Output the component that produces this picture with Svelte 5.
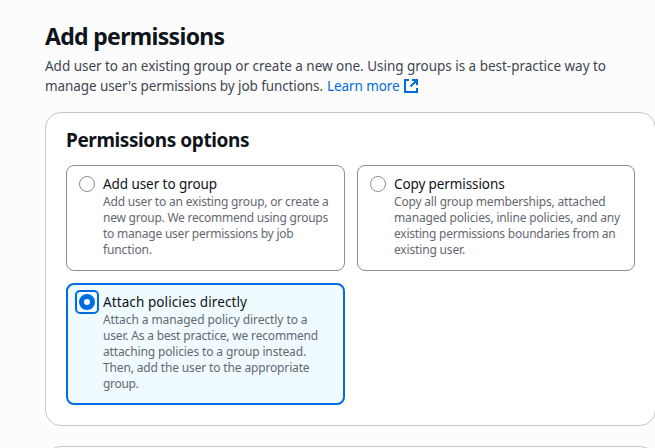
<script>
  let selected = $state('attach');

  const intro = [
    ['Add user to an existing group or create a new one. Using groups is a best-practice way to', 561],
    ["manage user's permissions by job functions.", 278]
  ];

  const options = [
    {
      id: 'group',
      label: ['Add user to group', 114],
      lines: [
        ['Add user to an existing group, or create a', 225.5],
        ['new group. We recommend using groups', 225],
        ['to manage user permissions by job', 190.5],
        ['function.', 49]
      ]
    },
    {
      id: 'copy',
      label: ['Copy permissions', 110.5],
      lines: [
        ['Copy all group memberships, attached', 211.5],
        ['managed policies, inline policies, and any', 226],
        ['existing permissions boundaries from an', 221.5],
        ['existing user.', 71]
      ]
    },
    {
      id: 'attach',
      label: ['Attach policies directly', 144],
      lines: [
        ['Attach a managed policy directly to a', 204.5],
        ['user. As a best practice, we recommend', 215],
        ['attaching policies to a group instead.', 203],
        ['Then, add the user to the appropriate', 206.5],
        ['group.', 35.5]
      ]
    }
  ];

  // Tracks a line of text so that it sets to the given measure.
  function measure(node, width) {
    const natural = node.getBoundingClientRect().width;
    node.style.letterSpacing = `${(width - natural) / node.textContent.length}px`;
  }
</script>

<main>
  <header>
    <h1><span class="line" use:measure={179.5}>Add permissions</span></h1>
    <p>
      <span class="line" use:measure={intro[0][1]}>{intro[0][0]}</span><br />
      <span class="line" use:measure={intro[1][1]}>{intro[1][0]}</span><a href="#learn"><span class="line" use:measure={72.5}>Learn more</span><svg viewBox="0 0 16 16" width="16" height="16" aria-hidden="true">
          <path d="M6 2H2v12h12v-4M9 2h5v5M14 2L7.5 8.5" />
        </svg></a>
    </p>
  </header>

  <section class="panel">
    <h2><span class="line" use:measure={183}>Permissions options</span></h2>
    <div class="tiles">
      {#each options as option}
        <label class="tile" class:selected={selected === option.id}>
          <input type="radio" name="permissions" value={option.id} bind:group={selected} />
          <span class="radio"></span>
          <span class="copy">
            <span class="name"><span class="line" use:measure={option.label[1]}>{option.label[0]}</span></span>
            {#each option.lines as [text, width]}
              <span class="desc"><span class="line" use:measure={width}>{text}</span></span>
            {/each}
          </span>
        </label>
      {/each}
    </div>
  </section>

  <section class="panel next"></section>
</main>

<style>
  :global(body) {
    background: #fcfcfd;
    overflow: hidden;
  }
  main {
    box-sizing: border-box;
    width: 656px;
    height: 448px;
    overflow: hidden;
    padding: 21px 0 0 45px;
    font-family: 'Noto Sans', 'Open Sans', sans-serif;
    color: #0f141a;
  }
  .line {
    display: inline-block;
    white-space: nowrap;
  }
  header {
    height: 91px;
  }
  h1 {
    margin: 0;
    font-size: 23px;
    line-height: 30px;
    font-weight: 700;
  }
  p {
    margin: 5px 0 0;
    font-size: 13.5px;
    line-height: 20px;
    color: #424650;
    white-space: nowrap;
  }
  a {
    margin-left: 4px;
    color: #006ce0;
    text-decoration: none;
  }
  a svg {
    margin-left: 3px;
    vertical-align: -3px;
    fill: none;
    stroke: #006ce0;
    stroke-width: 2;
  }
  .panel {
    box-sizing: border-box;
    width: 611px;
    height: 314px;
    padding: 15px 20px 0;
    border: 1px solid #c6c6cd;
    border-radius: 16px;
    background: #fff;
  }
  .next {
    margin-top: 20px;
  }
  h2 {
    margin: 0;
    font-size: 19px;
    line-height: 24px;
    font-weight: 700;
  }
  .tiles {
    display: grid;
    grid-template-columns: 279px 278px;
    gap: 12px;
    margin-top: 13px;
  }
  .tile {
    box-sizing: border-box;
    display: flex;
    align-items: flex-start;
    gap: 8px;
    padding: 9px 12px 12px;
    border: 1px solid #8c8c94;
    border-radius: 8px;
    cursor: pointer;
  }
  .tile.selected {
    padding: 8px 11px 11px;
    border: 2px solid #006ce0;
    background: #f0fbff;
  }
  input {
    position: absolute;
    opacity: 0;
    pointer-events: none;
  }
  .radio {
    box-sizing: border-box;
    flex: none;
    width: 16px;
    height: 16px;
    margin-top: 1px;
    border: 1px solid #8c8c94;
    border-radius: 50%;
    background: #fff;
  }
  .selected .radio {
    border: 5px solid #006ce0;
    position: relative;
  }
  .selected .radio::after {
    content: '';
    position: absolute;
    inset: -9px;
    border: 2px solid #006ce0;
    border-radius: 5px;
  }
  .copy {
    display: flex;
    flex-direction: column;
  }
  .name {
    height: 19px;
    font-size: 13.5px;
    line-height: 19px;
  }
  .desc {
    height: 16px;
    font-size: 12px;
    line-height: 16px;
    color: #656871;
  }
</style>
